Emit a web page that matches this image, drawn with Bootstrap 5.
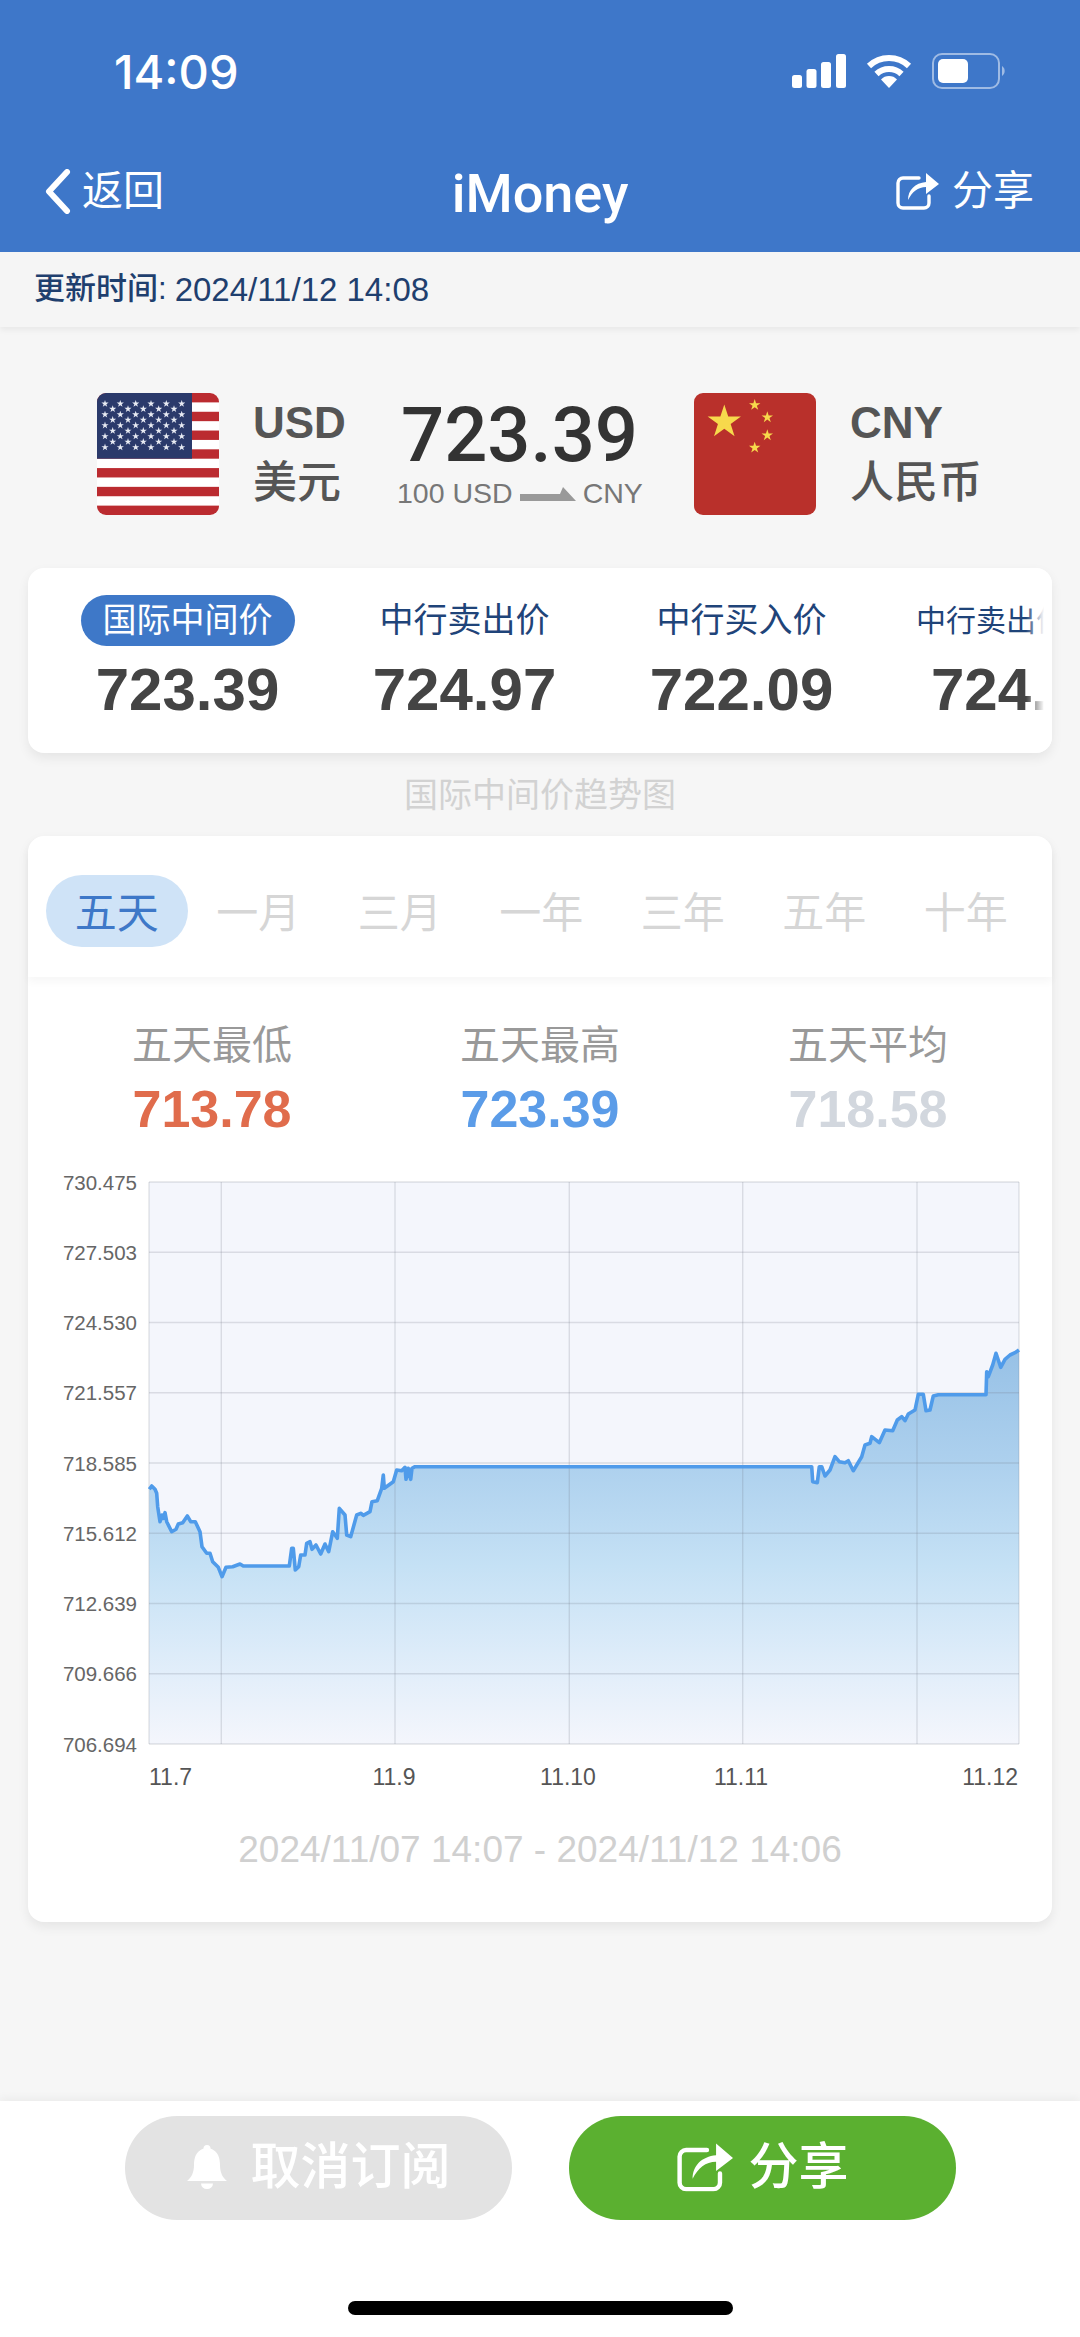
<!DOCTYPE html>
<html lang="zh-CN">
<head>
    <meta charset="UTF-8">
    <title>iMoney</title>
    <link rel="stylesheet" href="https://cdn.jsdelivr.net/npm/bootstrap@5.3.0/dist/css/bootstrap.min.css">
    <style>
        html, body { height: 100%; }
        body { background-color: #f6f6f6; font-family: "Liberation Sans", "Noto Sans CJK SC", sans-serif; color: #444; }
        .app-page { width: 1080px; height: 2337px; }

        .app-head { background-color: #3e77c9; color: #fff; height: 252px; display: block; padding: 0; }
        .status-row { height: 142px; padding: 0 73px 0 114px; }
        .status-time { font-family: Inter, sans-serif; font-weight: 500; font-size: 47px; line-height: 1; }
        .status-icons { gap: 20px; }
        .nav-row { height: 98px; padding: 0 46px 0 45px; position: relative; }
        .nav-side { font-size: 41px; font-weight: 400; line-height: 1; color: #fff; }
        .nav-back-text { margin-left: 11px; }
        .nav-share-text { margin-left: 13px; }
        .nav-title { position: absolute; left: 0; right: 0; top: 22px; text-align: center; font-family: Roboto, sans-serif; font-size: 54px; font-weight: 500; line-height: 1.1; }

        .update-bar { height: 75px; padding-left: 34px; background-color: #f5f5f5; color: #1f3f6e; font-size: 31px; font-weight: 500; box-shadow: 0 3px 6px rgba(0,0,0,.06); }
        .update-time { font-size: 33px; margin-left: 8px; }

        .rate-row { margin-top: 66px; padding-left: 97px; }
        .flag-box { width: 122px; height: 122px; display: block; flex: none; }
        .code-box { margin-left: 34px; color: #555; }
        .code-us { width: 110px; }
        .code-box b { display: block; font-size: 44px; line-height: 50px; margin-top: -3px; }
        .code-box span { display: block; font-size: 44px; line-height: 50px; margin-top: 10px; font-weight: 500; }
        .rate-mid { margin-left: 34px; margin-right: 52px; width: 245px; text-align: center; }
        .rate-big { font-family: Roboto, sans-serif; font-weight: 500; font-size: 76px; line-height: 76px; color: #333; margin-top: -2px; }
        .rate-sub { font-size: 28.5px; line-height: 32px; color: #777; margin-top: 4px; white-space: nowrap; }
        .rate-sub svg { margin: 0 7px; vertical-align: 2px; }

        .sheet { margin-left: 28px; margin-right: 28px; border: 0; border-radius: 16px; background-color: #fff; box-shadow: 0 5px 12px rgba(0,0,0,.07); }
        .price-sheet { margin-top: 53px; height: 185px; padding: 27px 5px 0 21px; overflow: hidden; }
        .price-sheet::after { content: ""; position: absolute; top: 0; bottom: 0; right: 0; width: 26px; background: linear-gradient(to right, rgba(255,255,255,0), #fff 70%); }
        .price-item { width: 277px; flex: none; text-align: center; }
        .price-label { display: inline-block; height: 51px; padding: 0 22px; font-size: 34px; line-height: 51px; color: #1f4479; white-space: nowrap; }
        .price-on { background-color: #3e78c8; color: #fff; border-radius: 26px; }
        .price-val { font-size: 60px; font-weight: 700; line-height: 70px; margin-top: 9px; color: #444; }
        .price-cut { text-align: left; }
        .price-cut .price-label { padding: 0; margin-left: 36px; font-size: 30px; }
        .price-cut .price-val { margin-left: 51px; }

        .trend-title { margin-top: 26px; font-size: 34px; line-height: 33px; text-align: center; color: #d2d2d2; }

        .trend-sheet { margin-top: 24px; height: 1086px; }
        .range-tabs { height: 141px; padding: 39px 0 0 18px; border-radius: 16px 16px 0 0; box-shadow: 0 5px 8px rgba(0,0,0,.035); flex-wrap: nowrap; }
        .range-tabs .nav-link { width: 141.5px; height: 72px; padding: 3px 0 0; font-size: 42px; line-height: 72px; text-align: center; color: #d6d6d6; border-radius: 36px; }
        .range-tabs .nav-link.active { background-color: #cfe3f7; color: #3e78c8; }
        .stat-row { margin: 46px 20px 0; }
        .stat-label { font-size: 40px; line-height: 44px; color: #999; }
        .stat-val { font-size: 52px; font-weight: 700; line-height: 60px; margin-top: 12px; }
        .stat-low { color: #e06c4c; }
        .stat-high { color: #5b9ce8; }
        .stat-avg { color: #d2d7de; }
        .chart-box { display: block; width: 1024px; height: 640px; margin-top: 21px; }
        .axis-y { font-family: "Liberation Sans", sans-serif; font-size: 20.5px; fill: #666; text-anchor: end; }
        .axis-x { font-family: "Liberation Sans", sans-serif; font-size: 23px; fill: #555; }
        .date-range { margin-top: 28px; font-size: 37px; line-height: 44px; text-align: center; color: #d0d0d0; }

        .foot-bar { height: 236px; background-color: #fff; padding-top: 15px; box-shadow: 0 -4px 8px rgba(0,0,0,.04); position: relative; }
        .foot-btn { width: 387px; height: 104px; padding-top: 4px; border: 0; border-radius: 52px; color: #fff; font-size: 50px; font-weight: 500; line-height: 1; }
        .foot-off { background-color: #e3e3e3; color: #fff; }
        .foot-on, .foot-on:hover { background-color: #5bb030; color: #fff; }
        .foot-gap { gap: 57px; padding-left: 125px; }
        .home-bar { position: absolute; left: 348px; top: 200px; width: 385px; height: 14px; border-radius: 7px; background-color: #000; }
    </style>
</head>
<body>
<div class="app-page d-flex flex-column">

    <header class="app-head navbar">
        <div class="status-row d-flex align-items-center justify-content-between">
            <span class="status-time">14:09</span>
            <span class="status-icons d-flex align-items-center">
                <svg width="54" height="34" viewBox="0 0 54 34" fill="#fff">
                    <rect x="0" y="21" width="10" height="13" rx="2.5"/>
                    <rect x="14.5" y="15" width="10" height="19" rx="2.5"/>
                    <rect x="29" y="8" width="10" height="26" rx="2.5"/>
                    <rect x="44" y="0" width="10" height="34" rx="2.5"/>
                </svg>
                <svg width="46" height="34" viewBox="0 0 46 34" fill="none" stroke="#fff" stroke-width="6">
                    <path d="M3 12 A29 29 0 0 1 43 12"/>
                    <path d="M10.5 20 A18 18 0 0 1 35.5 20"/>
                    <path d="M23 34 L15 25.5 A11 11 0 0 1 31 25.5 Z" fill="#fff" stroke="none"/>
                </svg>
                <svg width="75" height="36" viewBox="0 0 75 36">
                    <rect x="1" y="1" width="66" height="34" rx="9" fill="none" stroke="#fff" stroke-opacity=".5" stroke-width="2"/>
                    <rect x="6" y="6" width="30" height="24" rx="5" fill="#fff"/>
                    <path d="M70 13 a6 6 0 0 1 0 10 Z" fill="#fff" fill-opacity=".5"/>
                </svg>
            </span>
        </div>
        <div class="nav-row d-flex align-items-center justify-content-between">
            <a class="nav-side d-flex align-items-center text-decoration-none" href="#">
                <svg width="26" height="45" viewBox="0 0 26 45" fill="none" stroke="#fff" stroke-width="6" stroke-linecap="round" stroke-linejoin="round"><path d="M22 3 L4 22.5 L22 42"/></svg>
                <span class="nav-back-text">返回</span>
            </a>
            <span class="nav-title">iMoney</span>
            <a class="nav-side d-flex align-items-center text-decoration-none" href="#">
                <svg width="43" height="38" viewBox="0 0 43 38"><use href="#shareIcon"/></svg>
                <span class="nav-share-text">分享</span>
            </a>
        </div>
    </header>

    <div class="update-bar d-flex align-items-center">更新时间:<span class="update-time">2024/11/12 14:08</span></div>

    <main class="flex-grow-1">
        <section class="rate-row d-flex align-items-center">
            <svg class="flag-box" id="flagUs" viewBox="0 0 122 122"></svg>
            <div class="code-box code-us"><b>USD</b><span>美元</span></div>
            <div class="rate-mid">
                <div class="rate-big">723.39</div>
                <div class="rate-sub">100 USD<svg width="56" height="14" viewBox="0 0 56 14" fill="#999"><path d="M0 7 H40 L43 0 L56 14 H0 Z"/></svg>CNY</div>
            </div>
            <svg class="flag-box" id="flagCn" viewBox="0 0 122 122"></svg>
            <div class="code-box"><b>CNY</b><span>人民币</span></div>
        </section>

        <section class="card sheet price-sheet">
            <div class="d-flex">
                <div class="price-item"><span class="price-label price-on">国际中间价</span><div class="price-val">723.39</div></div>
                <div class="price-item"><span class="price-label">中行卖出价</span><div class="price-val">724.97</div></div>
                <div class="price-item"><span class="price-label">中行买入价</span><div class="price-val">722.09</div></div>
                <div class="price-item price-cut"><span class="price-label">中行卖出价</span><div class="price-val">724.97</div></div>
            </div>
        </section>

        <div class="trend-title">国际中间价趋势图</div>

        <section class="card sheet trend-sheet">
            <ul class="nav nav-pills range-tabs">
                <li class="nav-item"><a class="nav-link active" href="#">五天</a></li>
                <li class="nav-item"><a class="nav-link" href="#">一月</a></li>
                <li class="nav-item"><a class="nav-link" href="#">三月</a></li>
                <li class="nav-item"><a class="nav-link" href="#">一年</a></li>
                <li class="nav-item"><a class="nav-link" href="#">三年</a></li>
                <li class="nav-item"><a class="nav-link" href="#">五年</a></li>
                <li class="nav-item"><a class="nav-link" href="#">十年</a></li>
            </ul>
            <div class="row g-0 stat-row text-center">
                <div class="col-4"><div class="stat-label">五天最低</div><div class="stat-val stat-low">713.78</div></div>
                <div class="col-4"><div class="stat-label">五天最高</div><div class="stat-val stat-high">723.39</div></div>
                <div class="col-4"><div class="stat-label">五天平均</div><div class="stat-val stat-avg">718.58</div></div>
            </div>
            <svg class="chart-box" id="chart" viewBox="28 1160 1024 640">
                <defs>
                    <linearGradient id="areaFill" gradientUnits="userSpaceOnUse" x1="0" y1="1350" x2="0" y2="1744">
                        <stop offset="0" stop-color="#97c1e6"/>
                        <stop offset=".3" stop-color="#aed1ee"/>
                        <stop offset=".55" stop-color="#c5e1f5"/>
                        <stop offset=".82" stop-color="#e2eefa"/>
                        <stop offset="1" stop-color="#f4f6fc"/>
                    </linearGradient>
                </defs>
                <rect x="149" y="1182" width="870" height="562" fill="#f4f6fc"/>
                <path id="chartArea" fill="url(#areaFill)"/>
                <g id="chartGrid" stroke="#707580" stroke-opacity=".2" stroke-width="1.4"></g>
                <path id="chartLine" fill="none" stroke="#4f9bea" stroke-width="3.6" stroke-linejoin="round"/>
                <g id="chartY" class="axis-y"></g>
                <g class="axis-x">
                    <text x="149" y="1785">11.7</text>
                    <text x="394" y="1785" text-anchor="middle">11.9</text>
                    <text x="568" y="1785" text-anchor="middle">11.10</text>
                    <text x="741" y="1785" text-anchor="middle">11.11</text>
                    <text x="1018" y="1785" text-anchor="end">11.12</text>
                </g>
            </svg>
            <div class="date-range">2024/11/07 14:07 - 2024/11/12 14:06</div>
        </section>
    </main>

    <footer class="foot-bar">
        <div class="d-flex foot-gap">
            <button class="btn foot-btn foot-off d-flex align-items-center justify-content-center" type="button">
                <svg class="me-4" width="40" height="44" viewBox="0 0 40 44" fill="#fff"><path d="M20 0 a3.5 3.5 0 0 1 3.5 3.5 C31 6 33 13 33 20 C33 28 36 33 40 36 H0 C4 33 7 28 7 20 C7 13 9 6 16.5 3.5 A3.5 3.5 0 0 1 20 0 Z M14 38.5 H26 A6 5.5 0 0 1 14 38.5 Z"/></svg>
                取消订阅
            </button>
            <button class="btn foot-btn foot-on d-flex align-items-center justify-content-center" type="button">
                <svg class="me-3" width="56" height="52" viewBox="0 0 43 38"><use href="#shareIcon"/></svg>
                分享
            </button>
        </div>
        <div class="home-bar"></div>
    </footer>
</div>

<svg width="0" height="0" class="position-absolute">
    <symbol id="shareIcon" viewBox="0 0 43 38">
        <path d="M23 6 H7 a5 5 0 0 0-5 5 V31 a5 5 0 0 0 5 5 H28 a5 5 0 0 0 5-5 V24" fill="none" stroke="#fff" stroke-width="3.4" stroke-linecap="round"/>
        <path d="M12 28 C12 18 19 11 30 10 V1 L43 12 L30 22 V15 C22 15 16 20 12 28 Z" fill="#fff"/>
    </symbol>
</svg>

<script src="https://cdn.jsdelivr.net/npm/bootstrap@5.3.0/dist/js/bootstrap.bundle.min.js"></script>
<script>
    function starPoints(cx, cy, r) {
        const pts = [];
        for (let i = 0; i < 10; i++) {
            const rad = i % 2 ? r * 0.382 : r;
            const a = -Math.PI / 2 + i * Math.PI / 5;
            pts.push((cx + rad * Math.cos(a)).toFixed(2) + ',' + (cy + rad * Math.sin(a)).toFixed(2));
        }
        return pts.join(' ');
    }

    function starSvg(cx, cy, r, color) {
        return `<polygon points="${starPoints(cx, cy, r)}" fill="${color}"/>`;
    }

    // flags
    let us = '<clipPath id="usClip"><rect width="122" height="122" rx="9"/></clipPath><g clip-path="url(#usClip)"><rect width="122" height="122" fill="#fff"/>';
    for (let i = 0; i < 13; i += 2) {
        us += `<rect y="${i * 9.385}" width="122" height="9.385" fill="#bb2b30"/>`;
    }
    us += '<rect width="95" height="65.7" fill="#2b3a6b"/>';
    [10.7, 21.5, 32.4, 43.3, 54.3].forEach(y => {
        [8, 23.3, 38.7, 54, 69.3, 84.7].forEach(x => { us += starSvg(x, y, 3.8, '#e8ebf3'); });
    });
    [16, 26.9, 37.8, 48.8].forEach(y => {
        [15.7, 31, 46.3, 61.7, 77].forEach(x => { us += starSvg(x, y, 3.8, '#e8ebf3'); });
    });
    document.getElementById('flagUs').innerHTML = us + '</g>';

    let cn = '<rect width="122" height="122" rx="9" fill="#b9302b"/>';
    cn += starSvg(30.3, 29, 17.5, '#f7d94c');
    [[60.7, 12], [73.3, 24.3], [73.3, 42.3], [60.7, 54.7]].forEach(p => { cn += starSvg(p[0], p[1], 6, '#f7d94c'); });
    document.getElementById('flagCn').innerHTML = cn;

    // chart grid and y labels
    const yTicks = ['730.475', '727.503', '724.530', '721.557', '718.585', '715.612', '712.639', '709.666', '706.694'];
    let gridHtml = '', yHtml = '';
    yTicks.forEach((label, i) => {
        const y = 1182 + i * 70.25;
        gridHtml += `<line x1="149" x2="1019" y1="${y}" y2="${y}"/>`;
        yHtml += `<text x="137" y="${y + 7.5}">${label}</text>`;
    });
    [149, 221.3, 395, 569.3, 742.7, 917, 1019].forEach(x => {
        gridHtml += `<line y1="1182" y2="1744" x1="${x}" x2="${x}"/>`;
    });
    document.getElementById('chartGrid').innerHTML = gridHtml;
    document.getElementById('chartY').innerHTML = yHtml;

    // price line, traced from the reference at 3x
    const leftPts = [[298,988],[305,978],[315,988],[320,1000],[323,1040],[330,1085],[336,1065],[340,1075],[345,1058],[350,1085],[365,1115],[378,1108],[385,1092],[398,1088],[412,1068],[422,1085],[436,1085],[450,1115],[456,1160],[470,1180],[480,1180],[488,1205],[505,1222],[516,1250],[528,1222],[548,1220],[570,1212],[580,1218],[718,1218],[725,1165],[730,1165],[736,1230],[746,1220],[752,1185],[765,1185],[770,1150],[780,1145],[786,1168],[798,1155],[812,1182],[825,1152],[836,1175],[848,1115],[862,1135],[868,1045],[885,1065],[890,1125],[902,1130],[920,1065],[932,1060],[940,1066],[960,1055],[966,1025],[982,1022],[995,985],[1000,945],[1003,985],[1030,965],[1040,930],[1055,932],[1065,922],[1068,958],[1075,925],[1082,958],[1086,925],[1095,920]];
    const rightPts = [[0,920],[815,920],[818,965],[832,968],[838,920],[845,920],[855,948],[870,930],[885,890],[898,905],[915,908],[925,902],[940,932],[965,890],[975,855],[990,850],[995,830],[1018,848],[1035,810],[1058,812],[1072,780],[1085,770],[1095,782],[1105,762],[1125,750],[1135,703],[1150,703],[1158,752],[1170,750],[1180,708],[1195,704],[1338,704],[1340,635],[1345,650],[1358,615],[1368,580],[1382,622],[1395,598],[1410,585],[1425,578],[1437,570]];
    const linePts = leftPts.map(p => [50 + p[0] / 3, 1160 + p[1] / 3])
        .concat(rightPts.map(p => [540 + p[0] / 3, 1160 + p[1] / 3]));
    const lineD = 'M' + linePts.map(p => p[0].toFixed(1) + ' ' + p[1].toFixed(1)).join(' L');
    document.getElementById('chartLine').setAttribute('d', lineD);
    document.getElementById('chartArea').setAttribute('d', lineD + ' L1019 1744 L149 1744 Z');
</script>
</body>
</html>
